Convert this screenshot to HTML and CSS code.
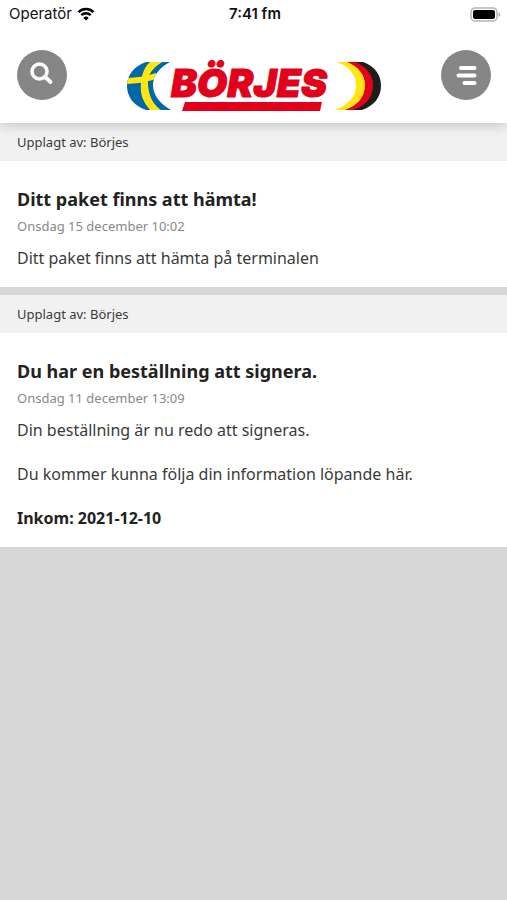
FILE: index.html
```html
<!doctype html>
<html lang="sv">

<head>
    <meta charset="utf-8">
    <meta name="viewport" content="width=device-width, initial-scale=1">
    <title>Börjes</title>
    <link rel="stylesheet" href="styles.css">
</head>

<body>
    <header class="top">
        <div class="status">
            <div class="carrier">
                <span>Operatör</span>
                <svg class="wifi" viewBox="0 0 18 14" aria-hidden="true">
                    <path d="M1.500 5.200a10.600 10.600 0 0 1 15 0" />
                    <path d="M4.300 8.200a6.600 6.600 0 0 1 9.400 0" />
                    <path class="wifi-dot" d="M9 13.600 6.300 10.900a3.800 3.800 0 0 1 5.400 0z" />
                </svg>
            </div>
            <span class="clock">7:41 fm</span>
            <svg class="battery" viewBox="0 0 31 15" aria-hidden="true">
                <rect x="1" y="1" width="26" height="13" rx="4" fill="#fff" stroke="#b5b5b5" stroke-width="1.500" />
                <rect x="3" y="3" width="22" height="9" rx="2" />
                <path d="M28.500 5v5q2-1 2-2.500t-2-2.500z" fill="#b5b5b5" />
            </svg>
        </div>
        <div class="bar">
            <button class="round" type="button" aria-label="Sök">
                <svg viewBox="0 0 50 50" aria-hidden="true">
                    <circle cx="22.500" cy="21.500" r="7.500" fill="none" stroke="#fff" stroke-width="3.600" />
                    <path d="m28 27 5.500 5" stroke="#fff" stroke-width="4" stroke-linecap="round" />
                </svg>
            </button>
            <a class="logo" href="#" aria-label="Börjes">
                <svg viewBox="0 0 256 50" aria-hidden="true">
                    <clipPath id="crescent">
                        <path d="M20 1H44C33 7 27 15 27 24C27 34 34 43 45 49H20C8 45 1 36 1 25C1 14 8 5 20 1z" />
                    </clipPath>
                    <g clip-path="url(#crescent)">
                        <path d="M0 0h46v50H0z" fill="#0067a8" />
                        <path d="M25 0H38C26 7 21 14 22 24C23 36 27 43 36 50H25C16 40 14 32 15 22C16 12 19 5 25 0z" fill="#ffe512" />
                        <path d="M0 17Q14 17 30 12V18Q14 23 0 23z" fill="#ffe512" />
                    </g>
                    <text class="wordmark" x="45" y="36">BÖRJES</text>
                    <path d="M59 41H196L194 50H56z" fill="#e2001a" />
                    <path d="M228 1H237C249 5 255 14 255 25C255 36 248 45 236 49H226C240 44 246 36 246 24C246 14 240 6 228 1z" fill="#1d1d1b" />
                    <path d="M220 1H229C241 6 247 14 247 24C247 36 240 45 227 49H218C231 44 238 36 238 24C238 15 233 6 220 1z" fill="#e2001a" />
                    <path d="M211 1H221C233 6 239 14 239 24C239 36 232 44 219 49H209C223 43 230 36 230 24C230 14 224 6 211 1z" fill="#ffe512" />
                </svg>
            </a>
            <button class="round" type="button" aria-label="Meny">
                <svg viewBox="0 0 50 50" aria-hidden="true">
                    <path d="M20 18h13.500M17.500 25.500h16M23.500 33h10" stroke="#fff" stroke-width="4" stroke-linecap="round" />
                </svg>
            </button>
        </div>
    </header>

    <main class="feed">
        <article class="post">
            <p class="author">Upplagt av: Börjes</p>
            <div class="content">
                <h2>Ditt paket finns att hämta!</h2>
                <time datetime="2021-12-15T10:02">Onsdag 15 december 10:02</time>
                <p>Ditt paket finns att hämta på terminalen</p>
            </div>
        </article>
        <article class="post">
            <p class="author">Upplagt av: Börjes</p>
            <div class="content">
                <h2>Du har en beställning att signera.</h2>
                <time datetime="2021-12-11T13:09">Onsdag 11 december 13:09</time>
                <p>Din beställning är nu redo att signeras.</p>
                <p>Du kommer kunna följa din information löpande här.</p>
                <p><strong>Inkom: 2021-12-10</strong></p>
            </div>
        </article>
    </main>
</body>

</html>
```
FILE: styles.css
```css
* {
    box-sizing: border-box;
}

body {
    margin: 0;
    background: #d7d7d7;
    color: #3a3a3a;
    font-family: "Noto Sans", sans-serif;
    font-size: 16px;
    line-height: 22px;
}

h2,
p {
    margin: 0;
}

.top {
    position: relative;
    background: #fff;
    box-shadow: 0 2px 12px rgba(0, 0, 0, 0.2);
}

.status {
    display: grid;
    grid-template-columns: 1fr auto 1fr;
    align-items: center;
    height: 28px;
    padding: 0 6px 0 9px;
    color: #111;
    font-family: Inter, sans-serif;
    font-size: 15px;
}

.carrier {
    display: flex;
    align-items: center;
    gap: 5px;
}

.wifi {
    width: 18px;
    height: 14px;
    fill: none;
    stroke: #000;
    stroke-width: 2.5;
}

.wifi .wifi-dot {
    fill: #000;
    stroke: none;
}

.clock {
    font-weight: 600;
}

.battery {
    justify-self: end;
    width: 31px;
    height: 15px;
}

.bar {
    display: flex;
    justify-content: space-between;
    align-items: flex-start;
    padding: 22px 16px 12px 17px;
}

.round {
    width: 50px;
    height: 50px;
    padding: 0;
    border: 0;
    border-radius: 50%;
    background: #868686;
    cursor: pointer;
}

.round svg,
.logo svg {
    display: block;
    width: 100%;
}

.logo {
    width: 256px;
    padding-top: 11px;
}

.logo svg {
    overflow: visible;
}

.wordmark {
    fill: #e2001a;
    stroke: #e2001a;
    stroke-width: 1;
    font-family: Inter, sans-serif;
    font-size: 39px;
    font-style: italic;
    font-weight: 900;
}

.post + .post {
    margin-top: 8px;
}

.author {
    padding: 8px 17px;
    background: #f1f1f1;
    font-size: 13px;
}

.content {
    padding: 24px 17px 18px;
    background: #fff;
}

.content h2 {
    color: #222;
    font-size: 18px;
    line-height: 28px;
}

.content time {
    display: block;
    margin-bottom: 8px;
    color: #888;
    font-size: 13px;
    line-height: 26px;
}

.content p + p {
    margin-top: 22px;
}

.content strong {
    color: #222;
}
```
